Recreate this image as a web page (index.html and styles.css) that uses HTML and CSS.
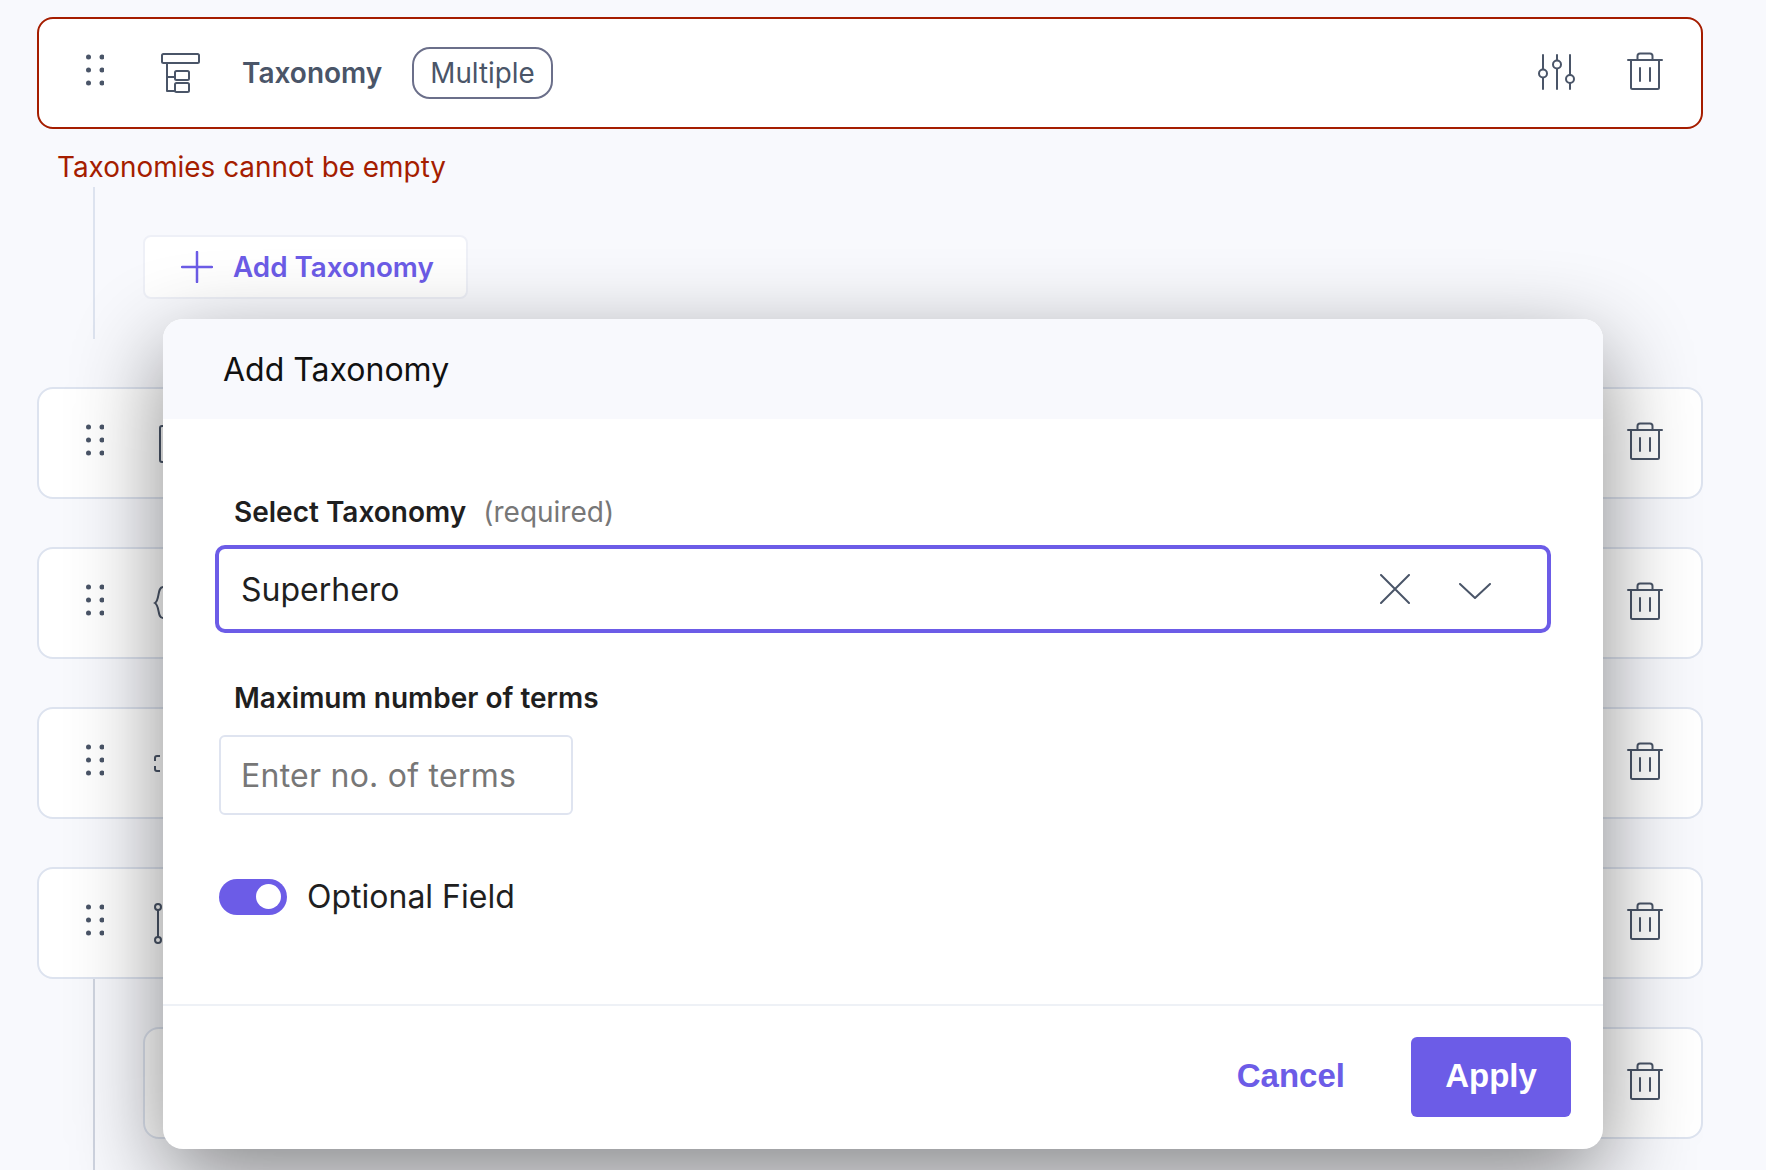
FILE: index.html
```html
<!DOCTYPE html>
<html lang="en">
<head>
<meta charset="utf-8">
<title>Add Taxonomy</title>
<link rel="stylesheet" href="styles.css">
</head>
<body>
<svg class="defs" width="0" height="0" aria-hidden="true">
  <symbol id="grip" viewBox="0 0 18 36"><g fill="#4a5568"><circle cx="2.500" cy="3" r="2.500"/><circle cx="16" cy="3" r="2.500"/><circle cx="2.500" cy="16" r="2.500"/><circle cx="16" cy="16" r="2.500"/><circle cx="2.500" cy="29" r="2.500"/><circle cx="16" cy="29" r="2.500"/></g></symbol>
  <symbol id="trash" viewBox="0 0 36 40"><g fill="none" stroke="#4a5568" stroke-width="2" stroke-linecap="round" stroke-linejoin="round"><path d="M1 9h34"/><path d="M4 9v27.500a1.500 1.500 0 0 0 1.500 1.500h25a1.500 1.500 0 0 0 1.500-1.500V9"/><path d="M10.500 9V5a2.500 2.500 0 0 1 2.500-2.500h10A2.500 2.500 0 0 1 25.500 5v4"/><path d="M13 17v13M23 17v13"/></g></symbol>
</svg>
<main class="page">
  <section class="card card-error">
    <svg class="grip"><use href="#grip"/></svg>
    <svg class="type-icon" viewBox="0 0 40 40" fill="none" stroke="#4a5568" stroke-width="2" stroke-linejoin="round"><rect x="1" y="1" width="37" height="9" rx="1.500"/><path d="M6 10v28h8M6 24h8"/><rect x="14" y="18" width="14" height="9" rx="1.500"/><rect x="14" y="30" width="14" height="9" rx="1.500"/></svg>
    <span class="card-title">Taxonomy</span>
    <span class="pill">Multiple</span>
    <svg class="sliders" viewBox="0 0 38 36" fill="none" stroke="#4a5568" stroke-width="2" stroke-linecap="round"><path d="M5 1v14M5 24v11M19 1v5M19 15v20M32 1v20M32 29v6"/><circle cx="5" cy="19.500" r="4"/><circle cx="19" cy="10.500" r="4"/><circle cx="32" cy="25" r="4"/></svg>
    <svg class="trash"><use href="#trash"/></svg>
  </section>
  <p class="error-text">Taxonomies cannot be empty</p>
  <div class="nested nested-first">
    <button class="add-btn" type="button">
      <svg class="plus" viewBox="0 0 32 32" stroke="#6c5ce7" stroke-width="2.500" stroke-linecap="round"><path d="M16 1v30M1 16h30"/></svg>
      Add Taxonomy
    </button>
  </div>
  <section class="card">
    <svg class="grip"><use href="#grip"/></svg>
    <svg class="row-icon" viewBox="0 0 40 40" fill="none" stroke="#4a5568" stroke-width="2"><rect x="6" y="3" width="30" height="36" rx="2"/></svg>
    <svg class="trash push"><use href="#trash"/></svg>
  </section>
  <section class="card">
    <svg class="grip"><use href="#grip"/></svg>
    <svg class="row-icon" viewBox="0 0 40 40" fill="none" stroke="#4a5568" stroke-width="2"><path d="M9 4C3 4 6 17 1 20c5 3 2 15 8 15"/></svg>
    <svg class="trash push"><use href="#trash"/></svg>
  </section>
  <section class="card">
    <svg class="grip"><use href="#grip"/></svg>
    <svg class="row-icon" viewBox="0 0 40 40" fill="none" stroke="#4a5568" stroke-width="2"><path d="M6 13H3a2 2 0 0 0-2 2v3M1 23v3a2 2 0 0 0 2 2h3"/></svg>
    <svg class="trash push"><use href="#trash"/></svg>
  </section>
  <section class="card">
    <svg class="grip"><use href="#grip"/></svg>
    <svg class="row-icon" viewBox="0 0 40 40" fill="none" stroke="#4a5568" stroke-width="2"><circle cx="4" cy="4" r="3"/><circle cx="4" cy="37" r="3"/><path d="M4 7v27"/></svg>
    <svg class="trash push"><use href="#trash"/></svg>
  </section>
  <div class="nested nested-second">
    <section class="card card-child">
      <svg class="trash push"><use href="#trash"/></svg>
    </section>
  </div>
</main>

<div class="modal" role="dialog" aria-label="Add Taxonomy">
  <header class="modal-head">Add Taxonomy</header>
  <div class="modal-body">
    <label class="label">Select Taxonomy <span class="req">(required)</span></label>
    <div class="select">
      <span class="select-value">Superhero</span>
      <svg class="clear" viewBox="0 0 30 30" stroke="#4a5568" stroke-width="2" stroke-linecap="round"><path d="M1 1l28 28M29 1L1 29"/></svg>
      <svg class="chevron" viewBox="0 0 32 16" fill="none" stroke="#4a5568" stroke-width="2" stroke-linecap="round" stroke-linejoin="round"><path d="M1 1l15 14L31 1"/></svg>
    </div>
    <label class="label label-second">Maximum number of terms</label>
    <div class="text-input">Enter no. of terms</div>
    <div class="toggle-row">
      <span class="toggle"><span class="knob"></span></span>
      <span class="toggle-label">Optional Field</span>
    </div>
  </div>
  <footer class="modal-foot">
    <button class="btn-cancel" type="button">Cancel</button>
    <button class="btn-apply" type="button">Apply</button>
  </footer>
</div>
</body>
</html>
```

FILE: styles.css
```css
* { box-sizing: border-box; }
html, body { margin: 0; height: 100%; }
body {
  width: 1766px;
  height: 1170px;
  overflow: hidden;
  position: relative;
  background: #f8f9fd;
  font-family: Inter, "Liberation Sans", sans-serif;
  color: #1f1f1f;
}
.defs { position: absolute; }
.page { padding: 17px 63px 0 37px; display: flex; flex-direction: column; }
.card {
  height: 112px;
  flex: none;
  background: #fff;
  border: 2px solid #dde3ef;
  border-radius: 16px;
  display: flex;
  align-items: center;
  margin-bottom: 48px;
  padding: 0 38px 0 47px;
}
.card-error { border-color: #a51d00; margin-bottom: 0; }
.grip { width: 18px; height: 36px; flex: none; margin-top: -3px; }
.type-icon { width: 40px; height: 40px; flex: none; margin-left: 57px; margin-top: -1px; overflow: visible; }
.row-icon { width: 40px; height: 40px; flex: none; margin-left: 50px; overflow: visible; }
.card-title { font-size: 28px; font-weight: 600; color: #4a5568; margin-left: 41px; }
.pill {
  margin-left: 30px;
  height: 52px;
  padding: 0 16px;
  display: flex;
  align-items: center;
  border: 2px solid #6b6f8a;
  border-radius: 18px;
  font-size: 27.800px;
  color: #4a5568;
}
.sliders { width: 38px; height: 36px; margin-left: auto; margin-top: -2px; flex: none; }
.trash { width: 36px; height: 40px; margin-left: 51px; margin-top: -4px; flex: none; }
.trash.push { margin-left: auto; }
.error-text { margin: 20px 0 0 20px; font-size: 27.900px; line-height: 36px; color: #a51d00; height: 38px; }
.nested { margin-left: 56px; flex: none; border-left: 2px solid #dde3ef; }
.nested-first { height: 152px; padding: 48px 0 0 48px; margin-bottom: 48px; }
.nested-second { margin-top: -48px; padding: 48px 0 60px 48px; border-left-color: #cfd4e0; }
.card-child { margin-bottom: 0; }
.add-btn {
  width: 325px;
  height: 64px;
  display: flex;
  align-items: center;
  padding: 0 0 0 36px;
  background: #fff;
  border: 2px solid #eef0f7;
  border-radius: 8px;
  font: 600 27.800px Inter, "Liberation Sans", sans-serif;
  color: #6c5ce7;
}
.plus { width: 32px; height: 32px; margin-right: 20px; flex: none; }

.modal {
  position: absolute;
  left: 163px;
  top: 319px;
  width: 1440px;
  height: 830px;
  background: #fff;
  border-radius: 20px;
  box-shadow: 0 30px 90px rgba(0, 0, 0, .46);
  display: flex;
  flex-direction: column;
}
.modal-head {
  height: 100px;
  flex: none;
  background: #f8f9fd;
  border-radius: 20px 20px 0 0;
  padding: 0 0 0 60px;
  display: flex;
  align-items: center;
  font-size: 32px;
  color: #111;
}
.modal-body { flex: 1; padding: 75px 52px 0; display: flex; flex-direction: column; }
.label { font-size: 28px; font-weight: 600; line-height: 36px; padding-left: 19px; color: #1f1f1f; }
.req { font-weight: 400; color: #777; margin-left: 10px; }
.label-second { margin-top: 47px; }
.select {
  margin-top: 15px;
  height: 88px;
  border: 4px solid #6c5ce7;
  border-radius: 10px;
  display: flex;
  align-items: center;
  padding: 0 56px 0 22px;
}
.select-value { font-size: 32px; flex: 1; }
.clear { width: 30px; height: 30px; margin-right: 49px; flex: none; }
.chevron { width: 32px; height: 16px; flex: none; margin-top: 3px; }
.text-input {
  margin: 19px 0 0 4px;
  width: 354px;
  height: 80px;
  border: 2px solid #dfe4f0;
  border-radius: 6px;
  padding-left: 20px;
  display: flex;
  align-items: center;
  font-size: 32px;
  letter-spacing: .25px;
  color: #777;
}
.toggle-row { display: flex; align-items: center; margin: 62px 0 0 4px; }
.toggle {
  width: 68px;
  height: 36px;
  border-radius: 18px;
  background: #6c5ce7;
  display: flex;
  align-items: center;
  justify-content: flex-end;
  padding-right: 6px;
}
.knob { width: 25px; height: 25px; border-radius: 50%; background: #fff; }
.toggle-label { font-size: 32px; margin-left: 20px; }
.modal-foot {
  height: 145px;
  flex: none;
  border-top: 2px solid #eef1f6;
  display: flex;
  align-items: center;
  justify-content: flex-end;
  padding: 0 32px 2px 0;
}
.btn-cancel, .btn-apply { font: 700 33px "Liberation Sans", sans-serif; border: 0; padding: 0 0 2px; }
.btn-cancel { background: none; color: #6c5ce7; margin-right: 66px; }
.btn-apply { width: 160px; height: 80px; background: #6c5ce7; color: #fff; border-radius: 6px; }
```
